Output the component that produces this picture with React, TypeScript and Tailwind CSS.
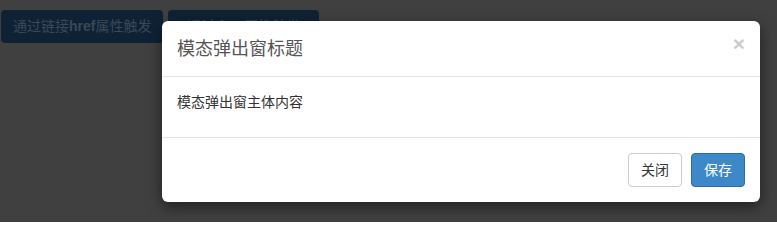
import React from "react";

export default function App() {
  const font = { fontFamily: '"Liberation Sans", "Noto Sans CJK SC", sans-serif' };
  return (
    <div className="relative w-[777px] h-[222px] bg-[#404040] overflow-hidden" style={font}>
      <div className="flex gap-[5px] pt-[10px] pl-[1px]">
        <div className="h-[33px] px-[12px] rounded-[4px] bg-[#0f2235] text-[#3a4858] text-[14px] flex items-center">
          通过链接<span className="font-bold">href</span>属性触发
        </div>
        <div className="h-[33px] w-[151px] px-[12px] rounded-[4px] bg-[#0f2235] text-[#3a4858] text-[14px] flex items-center justify-center">
          通过<span className="font-bold">data</span>属性触发
        </div>
      </div>

      <div className="absolute left-[162px] top-[21px] w-[598px] bg-white rounded-[6px] shadow-[0_5px_15px_rgba(0,0,0,0.5)]">
        <div className="relative h-[56px] px-[15px] flex items-center border-b border-[#e5e5e5]">
          <span className="text-[18px] text-[#555] leading-[26px]">模态弹出窗标题</span>
          <span className="absolute right-[15px] top-[12px] text-[21px] font-bold text-black opacity-20 leading-none">×</span>
        </div>
        <div className="h-[60px] px-[15px] pt-[15px] text-[14px] text-[#333] leading-[20px]">
          模态弹出窗主体内容
        </div>
        <div className="border-t border-[#e5e5e5] h-[65px] px-[15px] flex items-center justify-end gap-[9px]">
          <div className="h-[34px] w-[54px] rounded-[4px] border border-[#ccc] bg-white text-[#333] text-[14px] flex items-center justify-center">
            关闭
          </div>
          <div className="h-[34px] w-[54px] rounded-[4px] border border-[#2e6da4] bg-[#3d88c9] text-white text-[14px] flex items-center justify-center">
            保存
          </div>
        </div>
      </div>
    </div>
  );
}
